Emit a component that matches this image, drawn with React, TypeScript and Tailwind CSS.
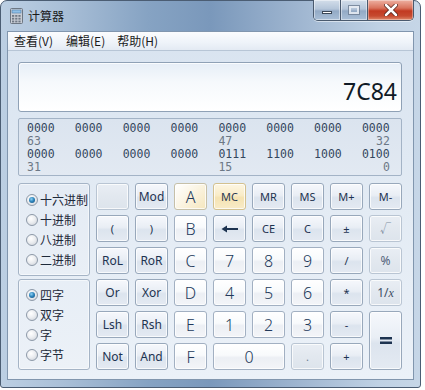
import React from "react";

type Kind = "op" | "num" | "hex" | "dis" | "hot" | "hexhot";

const kindCls: Record<Kind, string> = {
  op: "border-[#98a8bb] bg-[linear-gradient(180deg,#f6f8fc_0%,#e9eef5_45%,#dce4ee_55%,#e4eaf2_100%)]",
  num: "border-[#a2b0c2] bg-[linear-gradient(180deg,#ffffff_0%,#f8fafc_45%,#eceff4_55%,#f3f5f8_100%)]",
  hex: "border-[#a2b0c2] bg-[linear-gradient(180deg,#ffffff_0%,#f8fafc_45%,#eceff4_55%,#f3f5f8_100%)]",
  dis: "border-[#b9c5d3] bg-[linear-gradient(180deg,#e9eef4_0%,#e2e8ef_50%,#dde4ec_100%)]",
  hot: "border-[#d3c18f] bg-[linear-gradient(180deg,#fdf6e2_0%,#f9ecc8_45%,#f5e3b2_55%,#f8ebc8_100%)]",
  hexhot: "border-[#c6c0a8] bg-[linear-gradient(135deg,#ffffff_0%,#fbf5e4_45%,#f5e6bd_100%)]",
};

function Btn({
  kind = "op",
  children,
  className = "",
  color = "text-[#1d3350]",
}: {
  kind?: Kind;
  children?: React.ReactNode;
  className?: string;
  color?: string;
}) {
  return (
    <div
      className={`flex items-center justify-center rounded-[3px] border shadow-[inset_0_0_0_1px_rgba(255,255,255,0.75)] ${kindCls[kind]} ${color} ${className}`}
    >
      {children}
    </div>
  );
}

function Radio({ checked, label }: { checked?: boolean; label: string }) {
  return (
    <div className="flex h-[20px] items-center">
      <div className="ml-[7px] flex h-[12px] w-[12px] items-center justify-center rounded-full border border-[#8d99a8] bg-[radial-gradient(circle_at_40%_35%,#ffffff_0%,#eceef1_45%,#c9ced6_100%)]">
        {checked && (
          <div className="h-[6px] w-[6px] rounded-full bg-[radial-gradient(circle_at_40%_35%,#8fd2f5_0%,#2f86bd_45%,#124a78_100%)]" />
        )}
      </div>
      <span className="ml-[2px] text-[12px] leading-none text-[#1e2a3a]">{label}</span>
    </div>
  );
}

const top = ["0000", "0000", "0000", "0000", "0000", "0000", "0000", "0000"];
const bot = ["0000", "0000", "0000", "0000", "0111", "1100", "1000", "0100"];

function BitRow({ groups }: { groups: string[] }) {
  return (
    <div className="flex h-[13px] justify-between leading-[13px] text-[#34475e]">
      {groups.map((g, i) => (
        <span key={i} className="w-[28px]">
          {g}
        </span>
      ))}
    </div>
  );
}

function LabelRow({ a, b, c }: { a: string; b: string; c: string }) {
  const slots = ["", "", "", "", "", "", "", ""];
  return (
    <div className="flex h-[13px] justify-between leading-[13px] text-[#6c7886]">
      {slots.map((_, i) => (
        <span key={i} className={`w-[28px] ${i === 7 ? "text-right" : ""}`}>
          {i === 0 ? a : i === 4 ? b : i === 7 ? c : ""}
        </span>
      ))}
    </div>
  );
}

export default function App() {
  const cjk = { fontFamily: '"Noto Sans CJK SC", "Noto Sans", sans-serif' };
  const ui = { fontFamily: '"Noto Sans", "Noto Sans CJK SC", sans-serif' };
  const big = "text-[16px] font-light";
  const numColor = "text-[#22395a]";
  return (
    <div className="h-[390px] w-[425px] overflow-hidden bg-white" style={cjk}>
      <div className="flex h-[388px] w-[421px] flex-col rounded-t-[7px] rounded-b-[3px] border border-[#4b5d73] bg-[linear-gradient(90deg,#bccfe3_0%,#a9bfd7_15%,#86a3c3_35%,#7a98bb_50%,#9db4cf_70%,#bfd1e4_90%,#c6d6e7_100%)] px-[6px] pb-[7px]">
        {/* Title bar */}
        <div className="flex h-[30px] items-start justify-between">
          <div className="flex h-[30px] items-center pl-[3px]">
            <svg width="13" height="16" viewBox="0 0 13 16">
              <rect x="0.5" y="0.5" width="12" height="15" rx="1" fill="#c9ced6" stroke="#6d7783" />
              <rect x="2" y="2" width="9" height="3" fill="#8fc0e8" stroke="#4e7ca8" strokeWidth="0.6" />
              {[0, 1, 2].map((r) =>
                [0, 1, 2].map((c) => (
                  <rect key={`${r}${c}`} x={2 + c * 3.2} y={7 + r * 2.8} width="2.2" height="1.8" fill="#6f7884" />
                ))
              )}
            </svg>
            <span className="ml-[5px] text-[12px] leading-none text-[#1a1a1a]">计算器</span>
          </div>
          <div className="-mt-[1px] flex h-[21px] overflow-hidden rounded-b-[5px] border border-t-0 border-[#4a5a6e] shadow-[0_1px_0_rgba(255,255,255,0.5)]">
            <div className="flex w-[27px] items-center justify-center border-r border-[#4a5a6e] bg-[linear-gradient(180deg,#d3deea_0%,#b4c5d9_45%,#93aac5_55%,#a9bfd7_100%)] shadow-[inset_0_0_0_1px_rgba(255,255,255,0.45)]">
              <div className="mt-[5px] h-[3px] w-[10px] border border-[#3b4756] bg-white" />
            </div>
            <div className="flex w-[27px] items-center justify-center border-r border-[#4a5a6e] bg-[linear-gradient(180deg,#d3deea_0%,#b4c5d9_45%,#93aac5_55%,#a9bfd7_100%)] shadow-[inset_0_0_0_1px_rgba(255,255,255,0.45)]">
              <div className="h-[8px] w-[10px] border-2 border-[#eef2f7] outline outline-1 outline-[#6d7d92] opacity-80" />
            </div>
            <div className="flex w-[45px] items-center justify-center bg-[linear-gradient(180deg,#eeb1a2_0%,#d9735d_40%,#c23a22_55%,#c64a30_80%,#df8a6c_100%)] shadow-[inset_0_0_0_1px_rgba(255,255,255,0.35)]">
              <svg width="14" height="12" viewBox="0 0 14 12">
                <path d="M2 1 L12 11 M12 1 L2 11" stroke="#4a1a12" strokeWidth="4" strokeLinecap="round" />
                <path d="M2 1 L12 11 M12 1 L2 11" stroke="#ffffff" strokeWidth="2.6" strokeLinecap="round" />
              </svg>
            </div>
          </div>
        </div>

        {/* Client area */}
        <div className="flex flex-1 flex-col border border-[#8196ae] bg-[linear-gradient(180deg,#d8e3f0_0%,#e3ebf4_50%,#ebf1f8_100%)]">
          {/* Menu */}
          <div className="flex h-[19px] items-center border-b border-[#b7c5d6] bg-[linear-gradient(180deg,#fbfcfe_0%,#eef3f9_60%,#e3eaf3_100%)] text-[12px] leading-none text-[#1b1b1b]">
            <span className="ml-[6px]">查看(V)</span>
            <span className="ml-[13px]">编辑(E)</span>
            <span className="ml-[12px]">帮助(H)</span>
          </div>

          <div className="flex flex-col pl-[10px] pr-[11px] pt-[11px]">
            {/* Display */}
            <div
              className="flex h-[50px] items-end justify-end rounded-[3px] border border-[#8fa1b6] bg-[linear-gradient(180deg,#e6eef7_0%,#f6f9fc_40%,#ffffff_100%)] pb-[8px] pr-[4px] shadow-[inset_1px_1px_0_rgba(255,255,255,0.8)]"
              style={ui}
            >
              <span className="text-[23px] leading-none text-[#101a26]">7C84</span>
            </div>

            {/* Bits */}
            <div
              className="mt-[6px] flex h-[58px] flex-col rounded-[2px] border border-[#a3b3c6] bg-[linear-gradient(180deg,#dbe4ef_0%,#e2e9f2_100%)] pl-[8px] pr-[11px] pt-[3px] text-[11.5px]"
              style={{ fontFamily: '"DejaVu Sans Mono", "Liberation Mono", monospace' }}
            >
              <BitRow groups={top} />
              <LabelRow a="63" b="47" c="32" />
              <BitRow groups={bot} />
              <LabelRow a="31" b="15" c="0" />
            </div>

            {/* Bottom area */}
            <div className="mt-[7px] flex gap-[6px]">
              <div className="flex w-[72px] flex-col gap-[3px]">
                <div className="flex h-[93px] flex-col justify-center rounded-[3px] border border-[#a5b4c6] bg-[linear-gradient(180deg,#e4ebf4_0%,#e9eff6_100%)] shadow-[inset_0_0_0_1px_rgba(255,255,255,0.5)]">
                  <Radio checked label="十六进制" />
                  <Radio label="十进制" />
                  <Radio label="八进制" />
                  <Radio label="二进制" />
                </div>
                <div className="flex h-[91px] flex-col justify-center rounded-[3px] border border-[#a5b4c6] bg-[linear-gradient(180deg,#e7eef6_0%,#ecf1f7_100%)] shadow-[inset_0_0_0_1px_rgba(255,255,255,0.5)]">
                  <Radio checked label="四字" />
                  <Radio label="双字" />
                  <Radio label="字" />
                  <Radio label="字节" />
                </div>
              </div>

              <div
                className="grid grid-cols-[repeat(8,33px)] grid-rows-[repeat(6,27px)] gap-x-[6px] gap-y-[5px] text-[12px] leading-none"
                style={ui}
              >
                {/* Row 1 */}
                <Btn kind="dis" />
                <Btn>Mod</Btn>
                <Btn kind="hexhot" className={big} color={numColor}>A</Btn>
                <Btn kind="hot" className="text-[11px]" color="text-[#2a3a52]">MC</Btn>
                <Btn className="text-[11px]">MR</Btn>
                <Btn className="text-[11px]">MS</Btn>
                <Btn className="text-[11px]">M+</Btn>
                <Btn className="text-[11px]">M-</Btn>
                {/* Row 2 */}
                <Btn className="text-[11px]">(</Btn>
                <Btn className="text-[11px]">)</Btn>
                <Btn kind="hex" className={big} color={numColor}>B</Btn>
                <Btn>
                  <svg width="17" height="8" viewBox="0 0 17 8">
                    <path d="M5 4 H17" stroke="#1d3350" strokeWidth="2" />
                    <path d="M0.5 4 L6 0.5 L6 7.5 Z" fill="#1d3350" />
                  </svg>
                </Btn>
                <Btn className="text-[11px]">CE</Btn>
                <Btn className="text-[11px]">C</Btn>
                <Btn className="text-[11px]">±</Btn>
                <Btn kind="dis" className="text-[11px]" color="text-[#7d8c9f]">√</Btn>
                {/* Row 3 */}
                <Btn>RoL</Btn>
                <Btn>RoR</Btn>
                <Btn kind="hex" className={big} color={numColor}>C</Btn>
                <Btn kind="num" className={big} color={numColor}>7</Btn>
                <Btn kind="num" className={big} color={numColor}>8</Btn>
                <Btn kind="num" className={big} color={numColor}>9</Btn>
                <Btn className="text-[11px]">/</Btn>
                <Btn kind="dis" className="text-[12px]" color="text-[#52627a]">%</Btn>
                {/* Row 4 */}
                <Btn>Or</Btn>
                <Btn>Xor</Btn>
                <Btn kind="hex" className={big} color={numColor}>D</Btn>
                <Btn kind="num" className={big} color={numColor}>4</Btn>
                <Btn kind="num" className={big} color={numColor}>5</Btn>
                <Btn kind="num" className={big} color={numColor}>6</Btn>
                <Btn className="text-[11px]">*</Btn>
                <Btn kind="dis" className="text-[12px]" color="text-[#3d4e64]">
                  1/<span className="italic" style={{ fontFamily: '"Liberation Serif", serif' }}>x</span>
                </Btn>
                {/* Row 5 */}
                <Btn>Lsh</Btn>
                <Btn>Rsh</Btn>
                <Btn kind="hex" className={big} color={numColor}>E</Btn>
                <Btn kind="num" className={big} color={numColor}>1</Btn>
                <Btn kind="num" className={big} color={numColor}>2</Btn>
                <Btn kind="num" className={big} color={numColor}>3</Btn>
                <Btn className="text-[11px]">-</Btn>
                <Btn className="row-span-2">
                  <svg width="12" height="7" viewBox="0 0 12 7">
                    <rect x="0" y="0" width="12" height="2.5" fill="#1d3350" />
                    <rect x="0" y="4.5" width="12" height="2.5" fill="#1d3350" />
                  </svg>
                </Btn>
                {/* Row 6 */}
                <Btn>Not</Btn>
                <Btn>And</Btn>
                <Btn kind="hex" className={big} color={numColor}>F</Btn>
                <Btn kind="num" className={`col-span-2 ${big}`} color={numColor}>0</Btn>
                <Btn kind="dis" className="text-[11px]" color="text-[#6d7d92]">.</Btn>
                <Btn className="text-[11px]">+</Btn>
              </div>
            </div>
          </div>
        </div>
      </div>
    </div>
  );
}
